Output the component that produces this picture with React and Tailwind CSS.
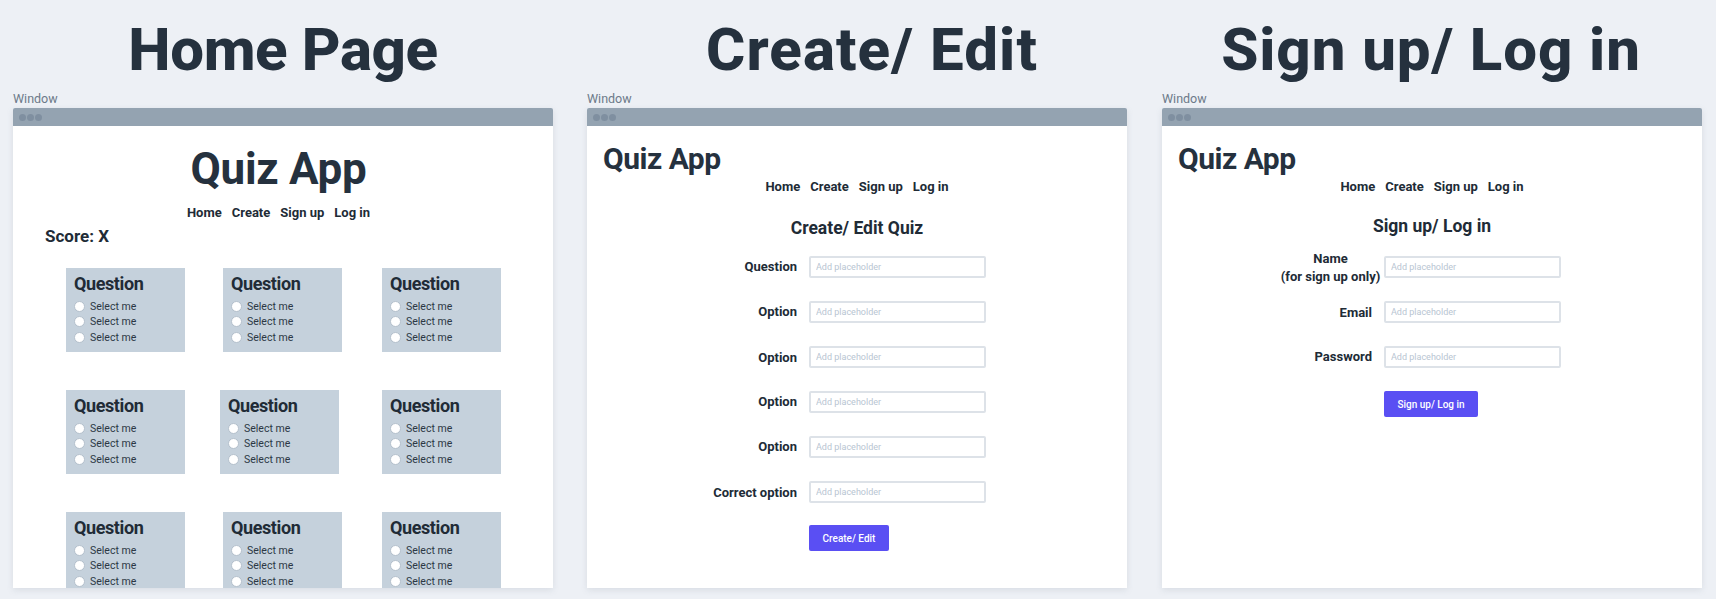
const rows = [
  ['ml-[38px]', 'ml-[40px]'],
  ['ml-[35px]', 'ml-[43px]'],
  ['ml-[38px]', 'ml-[40px]'],
];

function Nav() {
  return (
    <div className="flex justify-center gap-[10px] text-[13px] leading-[16px] font-bold text-[#212b36]">
      <span>Home</span>
      <span>Create</span>
      <span>Sign up</span>
      <span>Log in</span>
    </div>
  );
}

function Window({ title, titleClass, className, children }) {
  return (
    <div className={`w-[540px] shrink-0 ${className}`}>
      <h1 className={`h-[90px] pt-[15px] text-[60px] leading-[70px] font-extrabold whitespace-nowrap text-center text-[#25313e] ${titleClass}`}>
        {title}
      </h1>
      <div className="h-[18px] text-[12.5px] leading-[18px] text-[#6c7a89]">Window</div>
      <div className="rounded-t-[2px] shadow-[0_2px_6px_rgba(120,135,150,0.18)]">
        <div className="flex h-[18px] items-center gap-px rounded-t-[2px] bg-[#94a3b1] pl-[6px]">
          <span className="h-[7px] w-[7px] rounded-full bg-[#7f8fa0]" />
          <span className="h-[7px] w-[7px] rounded-full bg-[#7f8fa0]" />
          <span className="h-[7px] w-[7px] rounded-full bg-[#7f8fa0]" />
        </div>
        <div className="h-[462px] overflow-hidden bg-white">{children}</div>
      </div>
    </div>
  );
}

function Card({ className }) {
  return (
    <div className={`h-[84px] w-[119px] shrink-0 bg-[#c5d1dc] pt-[5px] pl-[8px] ${className}`}>
      <div className="text-[18px] leading-[22px] font-bold tracking-[-0.4px] text-[#212b36]">Question</div>
      <div className="mt-[4px] flex flex-col">
        {[0, 1, 2].map((i) => (
          <label key={i} className="flex h-[15px] items-center gap-[5px] text-[10.5px] text-[#2c3845] last:mt-px">
            <input type="radio" name="q" className="h-[11px] w-[11px] appearance-none rounded-full border border-[#b4c0cc] bg-white" />
            Select me
          </label>
        ))}
      </div>
    </div>
  );
}

function Field({ label, labelClass, children }) {
  return (
    <div className="flex h-[22px] gap-[12px]">
      <div className={`w-[210px] text-right text-[13px] leading-[16px] font-bold text-[#212b36] ${labelClass}`}>
        {label || children}
      </div>
      <input
        placeholder="Add placeholder"
        className="h-[22px] w-[177px] rounded-[2px] border-2 border-[#dde2e8] bg-white pl-[5px] text-[9px] outline-none placeholder:text-[#b8c5d2]"
      />
    </div>
  );
}

function AppHeader() {
  return (
    <>
      <div className="pt-[15px] pl-[16px] text-[30px] leading-[36px] font-bold tracking-[-0.5px] text-[#25313e]">Quiz App</div>
      <div className="mt-[2px]"><Nav /></div>
    </>
  );
}

export default function App() {
  return (
    <div className="flex h-[599px] w-[1716px] overflow-hidden bg-[#edf0f5] font-['Roboto',sans-serif]">
      <Window title="Home Page" className="ml-[13px]" titleClass="tracking-[-0.4px]">
        <div className="pt-[17px] pr-[9px] text-center text-[44px] leading-[52px] font-bold tracking-[-0.3px] text-[#25313e]">Quiz App</div>
        <div className="mt-[10px] pr-[9px]"><Nav /></div>
        <div className="mt-[5px] pl-[32px] text-[17px] leading-[20px] font-bold text-[#212b36]">Score: X</div>
        <div className="mt-[22px] flex flex-col gap-[38px]">
          {rows.map((r, i) => (
            <div key={i} className="flex pl-[53px]">
              <Card />
              <Card className={r[0]} />
              <Card className={r[1]} />
            </div>
          ))}
        </div>
      </Window>

      <Window title="Create/ Edit" className="ml-[34px]" titleClass="pl-[30px] tracking-[1.1px]">
        <AppHeader />
        <div className="mt-[23px] text-center text-[17.5px] leading-[20px] font-bold text-[#212b36]">Create/ Edit Quiz</div>
        <div className="mt-[18px] flex flex-col gap-[23px]">
          <Field label="Question" labelClass="pt-[3px]" />
          <Field label="Option" labelClass="pt-[3px]" />
          <Field label="Option" labelClass="pt-[4px]" />
          <Field label="Option" labelClass="pt-[3px]" />
          <Field label="Option" labelClass="pt-[3px]" />
          <Field label="Correct option" labelClass="pt-[4px]" />
        </div>
        <button className="mt-[22px] ml-[222px] h-[26px] w-[80px] rounded-[2px] bg-[#5a4ff3] text-[10px] font-medium text-white">Create/ Edit</button>
      </Window>

      <Window title="Sign up/ Log in" className="ml-[35px]" titleClass="pr-[2px] tracking-[0.9px]">
        <AppHeader />
        <div className="mt-[21px] text-center text-[17.5px] leading-[20px] font-bold text-[#212b36]">Sign up/ Log in</div>
        <div className="mt-[20px] flex flex-col gap-[23px]">
          <Field labelClass="-mt-[6px] !leading-[18px]">
            <div className="ml-[118px] w-[101px] text-center whitespace-nowrap">Name<br />(for sign up only)</div>
          </Field>
          <Field label="Email" labelClass="pt-[4px]" />
          <Field label="Password" labelClass="pt-[3px]" />
        </div>
        <button className="mt-[23px] ml-[222px] h-[26px] w-[94px] rounded-[2px] bg-[#5a4ff3] text-[10px] font-medium text-white">Sign up/ Log in</button>
      </Window>
    </div>
  );
}
